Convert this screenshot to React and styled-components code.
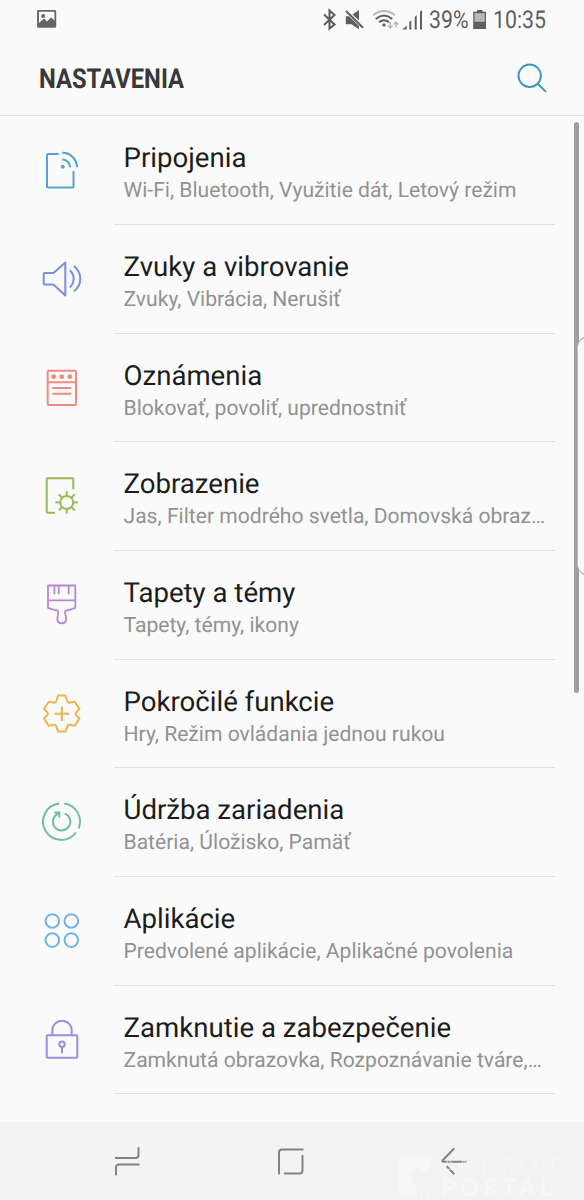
import React from 'react';
import styled, { createGlobalStyle } from 'styled-components';

const GlobalStyle = createGlobalStyle`
    body {
        margin: 0;
        background: #fafafa;
        font-family: Roboto, "Open Sans", sans-serif;
        text-rendering: geometricPrecision;
    }
    svg {
        display: block;
        flex: none;
        overflow: visible;
    }
`;

const Screen = styled.div`
    position: relative;
    display: flex;
    flex-direction: column;
    width: 584px;
    height: 1200px;
    overflow: hidden;
    background: #fafafa;
`;

const StatusBar = styled.div`
    display: flex;
    justify-content: space-between;
    align-items: center;
    height: 40px;
    padding: 0 38px 0 37px;
    color: #5f5f5f;
`;

const StatusGroup = styled.div`
    display: flex;
    align-items: center;
`;

const StatusText = styled.span`
    width: ${props => props.width};
    font-size: 24.5px;
    line-height: 40px;
    white-space: nowrap;
    transform: scaleX(0.87);
    transform-origin: left center;
`;

const Header = styled.header`
    display: flex;
    justify-content: space-between;
    align-items: center;
    box-sizing: border-box;
    height: 76.3px;
    padding: 2px 36px 0 39px;
    border-bottom: 1px solid #e2e2e2;
`;

const Heading = styled.h1`
    margin: 0;
    padding-top: 1px;
    color: #383838;
    font-size: 27.5px;
    font-weight: 700;
    line-height: 36px;
    transform: scaleX(0.865);
    transform-origin: left center;
`;

const List = styled.ul`
    flex: 1;
    margin: 0;
    padding: 0;
    list-style: none;
`;

const Row = styled.li`
    display: flex;
    height: 108.7px;
`;

const IconBox = styled.div`
    width: 114px;
    box-sizing: border-box;
    padding: 32px 0 0 40px;
    color: ${props => props.color};
`;

const Content = styled.div`
    box-sizing: border-box;
    width: 441px;
    padding: 24px 8px 0 9.5px;
    border-bottom: 1px solid #e0e0e0;
`;

const Title = styled.div`
    color: #1c1c1c;
    font-size: 27.6px;
    line-height: 35px;
    white-space: nowrap;
`;

const Summary = styled.div`
    color: #929292;
    font-size: 21.1px;
    line-height: 31.5px;
    white-space: nowrap;
`;

const ScrollThumb = styled.div`
    position: absolute;
    top: 122px;
    left: 574px;
    width: 5px;
    height: 571px;
    border-radius: 3px;
    background: #a0a0a0;
`;

const EdgeHandle = styled.div`
    position: absolute;
    top: 336px;
    left: 577px;
    box-sizing: border-box;
    width: 30px;
    height: 240px;
    border: 1px solid #a3a3a3;
    border-left-color: #bcbcbc;
    border-radius: 12px;
    background: #fafafa;
`;

const NavBar = styled.nav`
    display: flex;
    gap: 124px;
    box-sizing: border-box;
    height: 78px;
    padding: 19px 0 0 107px;
    background: #f3f3f3;
    color: #838383;
`;

const Watermark = styled.div`
    position: absolute;
    left: 397px;
    bottom: 0;
    display: flex;
    gap: 8px;
    height: 44px;
    color: #fafafa;
    opacity: 0.65;
`;

const WatermarkText = styled.div`
    font-size: 24px;
    line-height: 21px;
    font-family: Lato, sans-serif;
`;

const WatermarkLine = styled.div`
    font-weight: ${props => props.weight};
    letter-spacing: ${props => props.spacing};
`;

const Line = ({ children, size = 44, width = 2 }) => (
    <svg
        width={size}
        height={size}
        viewBox={`0 0 ${size} ${size}`}
        fill="none"
        stroke="currentColor"
        strokeWidth={width}
        strokeLinejoin="round"
    >
        {children}
    </svg>
);

const ConnectionsIcon = () => (
    <Line>
        <path d="M18.8 6H8Q7 6 7 7V38.5Q7 39.5 8 39.5H32.5Q33.5 39.5 33.5 38.5V23" />
        <path d="M22.3 11.5A7.6 7.6 0 0 1 30 19.2M22.3 4.8A14.5 14.5 0 0 1 37 19.2" />
        <circle cx="22.7" cy="18.7" r="2" fill="currentColor" stroke="none" />
    </Line>
);

const SoundIcon = () => (
    <Line>
        <path d="M4.5 16H13.5L25.3 5.5V38.5L13.5 27.6H4.5Q3.7 27.6 3.7 26.6V17Q3.7 16 4.5 16Z" />
        <path d="M29.8 13.3A11.5 11.5 0 0 1 29.8 30.4M33.9 9Q40.3 14.2 40.3 21.7T33.9 34.6" />
    </Line>
);

const NotificationsIcon = () => (
    <Line>
        <rect x="7.7" y="4.8" width="28.3" height="34.3" rx="1" />
        <path d="M7.7 16.2H36M12.3 22H31.3M12.3 27.8H31.3" />
        <g fill="currentColor" stroke="none">
            <circle cx="13.7" cy="10.7" r="2.4" />
            <circle cx="21.8" cy="10.7" r="2.4" />
            <circle cx="29.8" cy="10.7" r="2.4" />
        </g>
    </Line>
);

const rays = [0, 45, 90, 135, 180, 225, 270, 315];

const DisplayIcon = () => (
    <Line>
        <path d="M15 38.7H7.7Q6.7 38.7 6.7 37.7V5.3Q6.7 4.3 7.7 4.3H32.3Q33.3 4.3 33.3 5.3V15.2" />
        <circle cx="26.7" cy="28.4" r="6.5" />
        {rays.map(angle => (
            <path key={angle} d="M26.7 21.5V17.1" transform={`rotate(${angle} 26.7 28.4)`} />
        ))}
    </Line>
);

const ThemesIcon = () => (
    <Line width={1.8}>
        <path d="M8 2.5H35.3V24.8Q29 27.3 26.5 27.3C23.5 27.5 26.2 33 26.2 36.5A4.5 4.5 0 0 1 17.3 36.5C17.3 33 19.8 27.5 17 27.3Q14 27.2 8 24.8Z" />
        <path d="M8 17.3H35.3M14.4 2.5V11.3M18.7 2.5V11.3M28.7 2.5V11.3" />
    </Line>
);

const AdvancedIcon = () => (
    <Line>
        <path d="M18.2 3.5H25.4L27.3 9.1Q28 11 30 10.6L34.7 9.7L39.4 16.8L36 20.6Q35 21.7 36 22.8L39.4 26.6L34.7 33.8L30 32.8Q28 32.4 27.3 34.3L25.4 39.6H18.2L16.3 34.3Q15.6 32.4 13.6 32.8L8.7 33.8L4.1 26.6L7.5 22.8Q8.5 21.7 7.5 20.6L4.1 16.8L8.7 9.7L13.6 10.6Q15.6 11 16.3 9.1Z" />
        <path d="M14.6 21.8H29M21.8 14.6V29" />
    </Line>
);

const MaintenanceIcon = () => (
    <Line>
        <path d="M24.3 3.6A18.2 18.2 0 0 1 38.7 28.4M35.9 32.5A18.2 18.2 0 1 1 19.3 3.6" />
        <path d="M24.8 13.6A8.7 8.7 0 1 1 16.3 14.8L19.3 12.9M14.2 12.6H19.3V17.5" />
    </Line>
);

const AppsIcon = () => (
    <Line>
        <circle cx="12.3" cy="12" r="6.8" />
        <circle cx="31.3" cy="12" r="6.8" />
        <circle cx="12.3" cy="31.1" r="6.8" />
        <circle cx="31.3" cy="31.1" r="6.8" />
    </Line>
);

const LockIcon = () => (
    <Line>
        <rect x="6.7" y="17.2" width="30.6" height="22.5" rx="1" />
        <path d="M12.3 17.2V12.5A9.7 9.7 0 0 1 31.7 12.5V17.2M22 28.9V35.2" />
        <circle cx="22" cy="26.2" r="2.7" />
    </Line>
);

const items = [
    { title: 'Pripojenia', summary: 'Wi-Fi, Bluetooth, Využitie dát, Letový režim', color: '#50a5d2', icon: ConnectionsIcon },
    { title: 'Zvuky a vibrovanie', summary: 'Zvuky, Vibrácia, Nerušiť', color: '#7b8fdf', icon: SoundIcon },
    { title: 'Oznámenia', summary: 'Blokovať, povoliť, uprednostniť', color: '#f08b7e', icon: NotificationsIcon },
    { title: 'Zobrazenie', summary: 'Jas, Filter modrého svetla, Domovská obraz…', color: '#99bb55', icon: DisplayIcon },
    { title: 'Tapety a témy', summary: 'Tapety, témy, ikony', color: '#b887d2', icon: ThemesIcon },
    { title: 'Pokročilé funkcie', summary: 'Hry, Režim ovládania jednou rukou', color: '#ebb550', icon: AdvancedIcon },
    { title: 'Údržba zariadenia', summary: 'Batéria, Úložisko, Pamäť', color: '#71bea3', icon: MaintenanceIcon },
    { title: 'Aplikácie', summary: 'Predvolené aplikácie, Aplikačné povolenia', color: '#72b5e0', icon: AppsIcon },
    { title: 'Zamknutie a zabezpečenie', summary: 'Zamknutá obrazovka, Rozpoznávanie tváre,…', color: '#9c8edb', icon: LockIcon },
];

const PictureIcon = () => (
    <svg width="20" height="20" viewBox="0 0 20 20" fill="#666">
        <path fillRule="evenodd" d="M1.5 0H17.8Q19.2 0 19.2 1.4V16.4Q19.2 17.8 17.8 17.8H1.5Q.1 17.8 .1 16.4V1.4Q.1 0 1.5 0ZM2 1.8V13L7 8.6L10 11.4L14.2 7.2L17.4 10.4V1.8Z" />
        <circle cx="6.2" cy="6" r="2" />
    </svg>
);

// bluetooth, mute, wifi and signal strength
const StatusIcons = () => (
    <svg width="107" height="24" viewBox="322 7.5 107 24" fill="none" stroke="#5f5f5f">
        <path strokeWidth="2.1" d="M324 14L334.5 24L329.5 28V10L334.5 14.5L324 24.5" />
        <path fill="#5f5f5f" stroke="none" d="M345.8 15.8H349L359 25.5V28.7L351.5 23.8H345.8ZM352.5 14L359 9.5V20Z" />
        <path strokeWidth="2" d="M346 10.5L363 27.3" />
        <path stroke="#b9b9b9" strokeWidth="1.8" d="M373.2 14.5Q384 6.5 394.8 14.5" />
        <path strokeWidth="2" d="M375.8 18.4Q384 11.5 392.2 18.4M379 21.8Q384 17.6 389 21.8" />
        <circle cx="384" cy="24.4" r="1.7" fill="#5f5f5f" stroke="none" />
        <path stroke="#b5b5b5" strokeWidth="1.4" d="M390.3 21.5V27.5M388 25L390.3 27.5L392.6 25M396 27V21.5M393.7 24L396 21.5L398.3 24" />
        <path fill="#5f5f5f" stroke="none" d="M402.2 29L406.7 25.3V29ZM409.3 21.5L411.3 19.8V29H409.3ZM414.7 16.5L416.7 14.8V29H414.7ZM420 11.2L422 9.6V29H420Z" />
    </svg>
);

const Battery = styled.div`
    margin-right: 5.5px;
`;

const BatteryIcon = () => (
    <svg width="14" height="20" viewBox="0 0 14 20">
        <path fill="#5f5f5f" d="M4 0H9.5V1.8H13V19H.2V1.8H4Z" />
        <path fill="#b7b7b7" d="M1.5 3.2H11.8V11.8H1.5Z" />
    </svg>
);

const SearchIcon = () => (
    <Line size={32} width={2}>
        <circle cx="13.7" cy="12.8" r="11.2" stroke="#3f97b8" />
        <path d="M21.7 20.8L30 28.9" stroke="#3f97b8" />
    </Line>
);

const WatermarkLogo = () => (
    <svg width="36" height="44" viewBox="0 0 36 44" fill="currentColor">
        <path d="M3 1H34V10L27 16L20 12Q14 14 14 21Q14 28 20 31V41H6Q2 40 1 35V3Q1 1 3 1Z" />
        <path d="M24 38H26V43H24ZM30 36H32V43H30Z" />
    </svg>
);

const App = () => (
    <>
        <GlobalStyle />
        <Screen>
            <StatusBar>
                <PictureIcon />
                <StatusGroup>
                    <StatusIcons />
                    <StatusText width="44px">39%</StatusText>
                    <Battery><BatteryIcon /></Battery>
                    <StatusText width="53.5px">10:35</StatusText>
                </StatusGroup>
            </StatusBar>
            <Header>
                <Heading>NASTAVENIA</Heading>
                <SearchIcon />
            </Header>
            <List>
                {items.map(({ title, summary, color, icon: Icon }) => (
                    <Row key={title}>
                        <IconBox color={color}><Icon /></IconBox>
                        <Content>
                            <Title>{title}</Title>
                            <Summary>{summary}</Summary>
                        </Content>
                    </Row>
                ))}
            </List>
            <NavBar>
                <Line size={40} width={2}>
                    <path d="M8 17H28.5Q31.5 17 31.5 14V6.3M9 34.3V26.5Q9 23.5 12 23.5H32.5" />
                </Line>
                <Line size={40} width={2}>
                    <path d="M8 33.3V11.5Q8 8.5 11 8.5H32.5M31.5 14V29.5Q31.5 32.5 28.5 32.5H13" />
                </Line>
                <Line size={40} width={2}>
                    <path d="M19.3 7.3L7.5 19.5Q7 20.7 8.5 20.7H31.5M11.5 25L19.3 33.3" />
                </Line>
            </NavBar>
            <ScrollThumb />
            <EdgeHandle />
            <Watermark>
                <WatermarkLogo />
                <WatermarkText>
                    <WatermarkLine weight={300} spacing="2.8px">ANDROID</WatermarkLine>
                    <WatermarkLine weight={700} spacing="4px">PORTAL</WatermarkLine>
                </WatermarkText>
            </Watermark>
        </Screen>
    </>
);

export default App;
